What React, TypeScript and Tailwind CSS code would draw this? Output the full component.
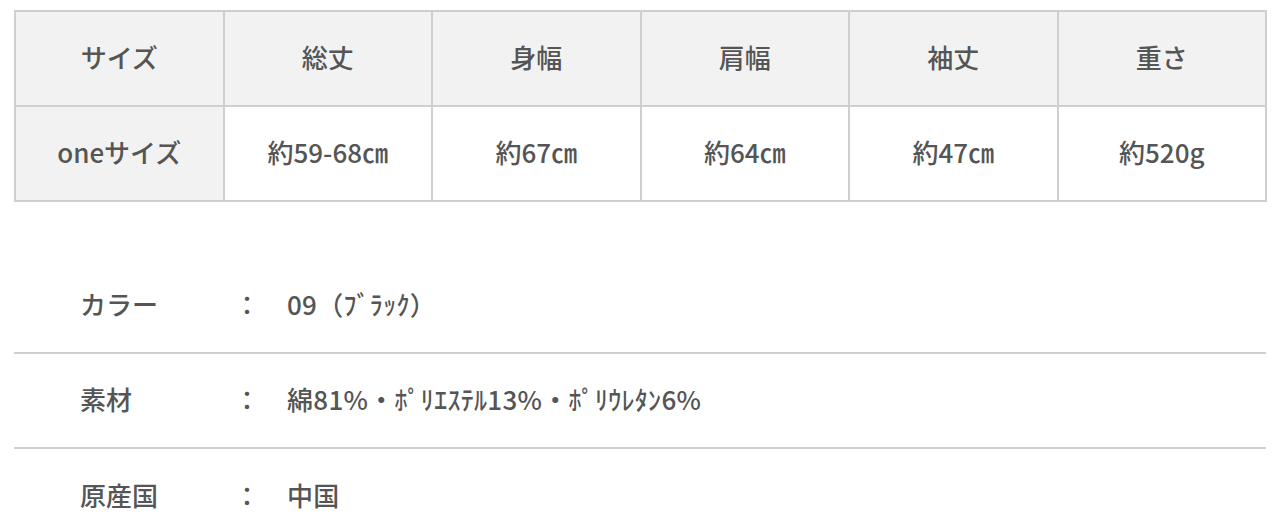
import React from 'react';

const headers = ['サイズ', '総丈', '身幅', '肩幅', '袖丈', '重さ'];
const values = ['oneサイズ', '約59-68㎝', '約67㎝', '約64㎝', '約47㎝', '約520g'];

const specs = [
  { label: 'カラー', value: '09（ﾌﾞﾗｯｸ）' },
  { label: '素材', value: '綿81%・ﾎﾟﾘｴｽﾃﾙ13%・ﾎﾟﾘｳﾚﾀﾝ6%' },
  { label: '原産国', value: '中国' },
];

export default function App() {
  return (
    <div
      className="bg-white px-[14px] pt-[10px] text-[#555] font-medium"
      style={{ fontFamily: '"Noto Sans CJK JP", "Noto Sans", sans-serif' }}
    >
      <table className="w-[1253px] table-fixed border-collapse text-[26px]">
        <tbody>
          <tr className="h-[95px] bg-[#f2f2f2]">
            {headers.map((h) => (
              <td key={h} className="border-2 border-[#cfcfcf] pb-[4px] text-center align-middle">
                {h}
              </td>
            ))}
          </tr>
          <tr className="h-[95px]">
            {values.map((v, i) => (
              <td
                key={v}
                className={`border-2 border-[#cfcfcf] pb-[4px] text-center align-middle ${
                  i === 0 ? 'bg-[#f2f2f2]' : 'bg-white'
                }`}
              >
                {v}
              </td>
            ))}
          </tr>
        </tbody>
      </table>

      <div className="mt-[57px]">
        {specs.map((s, i) => (
          <div
            key={s.label}
            className={`flex h-[95px] items-center pb-[4px] pl-[66px] text-[26px] ${
              i < specs.length - 1 ? 'border-b-2 border-[#cfcfcf]' : ''
            }`}
          >
            <span className="w-[154px]">{s.label}</span>
            <span className="w-[53px]">：</span>
            <span className="tracking-[0.3px]">{s.value}</span>
          </div>
        ))}
      </div>
    </div>
  );
}
